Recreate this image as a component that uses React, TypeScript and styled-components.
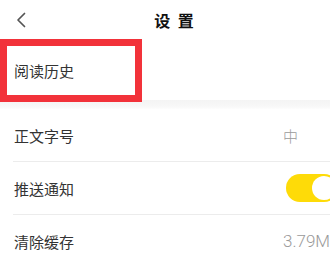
import React from 'react';
import styled, { createGlobalStyle } from 'styled-components';

const GlobalStyle = createGlobalStyle`
  html, body {
    margin: 0;
    padding: 0;
    background: #fff;
    overflow: hidden;
  }
  body {
    font-family: "Noto Sans CJK SC", "Noto Sans", sans-serif;
  }
`;

const Screen = styled.div`
  width: 330px;
  height: 256px;
  overflow: hidden;
  background: #fff;
`;

const Header = styled.div`
  position: relative;
  height: 40px;
  display: flex;
  align-items: center;
  justify-content: center;
  padding-left: 20px;
`;

const BackButton = styled.div`
  position: absolute;
  left: 15px;
  top: 12px;
  width: 12px;
  height: 16px;
  display: flex;
  align-items: center;
  justify-content: center;
`;

const Title = styled.h1`
  margin: 0;
  font-size: 16px;
  font-weight: 700;
  color: #111;
  letter-spacing: 2px;
  line-height: 1;
`;

const Section = styled.div`
  position: relative;
  height: 60px;
  display: flex;
  align-items: center;
  padding-left: 14px;
`;

const Highlight = styled.div`
  position: absolute;
  left: 0;
  top: -1px;
  width: 142px;
  height: 63px;
  box-sizing: border-box;
  border: 7px solid #f2323a;
`;

const Gap = styled.div`
  height: 9px;
  background: linear-gradient(#f4f4f4, #f8f8f8 70%, #fdfdfd);
`;

const Row = styled.div<{ $last?: boolean }>`
  height: 52px;
  display: flex;
  align-items: center;
  margin-left: 13px;
  padding-left: 1px;
  border-bottom: ${(p) => (p.$last ? 'none' : '1px solid #ececec')};
`;

const Label = styled.span`
  flex: 1;
  font-size: 15px;
  color: #333;
`;

const Trailing = styled.div`
  width: 47px;
  display: flex;
  align-items: center;
  overflow: hidden;
`;

const Value = styled.span<{ $latin?: boolean }>`
  font-size: ${(p) => (p.$latin ? '17px' : '15px')};
  font-family: ${(p) => (p.$latin ? 'Roboto, "Liberation Sans", sans-serif' : 'inherit')};
  font-weight: 300;
  color: #9a9a9a;
  white-space: nowrap;
`;

const Toggle = styled.div<{ $on: boolean }>`
  flex: none;
  margin-left: 3px;
  width: 52px;
  height: 28px;
  border-radius: 14px;
  background: ${(p) => (p.$on ? '#fedb08' : '#e5e5e5')};
  display: flex;
  align-items: center;
  justify-content: ${(p) => (p.$on ? 'flex-end' : 'flex-start')};
  padding: 0 2px;
  box-sizing: border-box;
`;

const Knob = styled.div`
  width: 24px;
  height: 24px;
  border-radius: 50%;
  background: #fff;
`;

export default function App() {
  return (
    <>
      <GlobalStyle />
      <Screen>
        <Header>
          <BackButton>
            <svg width="10" height="16" viewBox="0 0 10 16">
              <path d="M8.5 1.5 L2 8 L8.5 14.5" fill="none" stroke="#555" strokeWidth="1.7" strokeLinecap="round" strokeLinejoin="round" />
            </svg>
          </BackButton>
          <Title>设 置</Title>
        </Header>
        <Section>
          <Label>阅读历史</Label>
          <Highlight />
        </Section>
        <Gap />
        <Row>
          <Label>正文字号</Label>
          <Trailing>
            <Value>中</Value>
          </Trailing>
        </Row>
        <Row>
          <Label>推送通知</Label>
          <Trailing>
            <Toggle $on>
              <Knob />
            </Toggle>
          </Trailing>
        </Row>
        <Row $last>
          <Label>清除缓存</Label>
          <Trailing>
            <Value $latin>3.79M</Value>
          </Trailing>
        </Row>
      </Screen>
    </>
  );
}
